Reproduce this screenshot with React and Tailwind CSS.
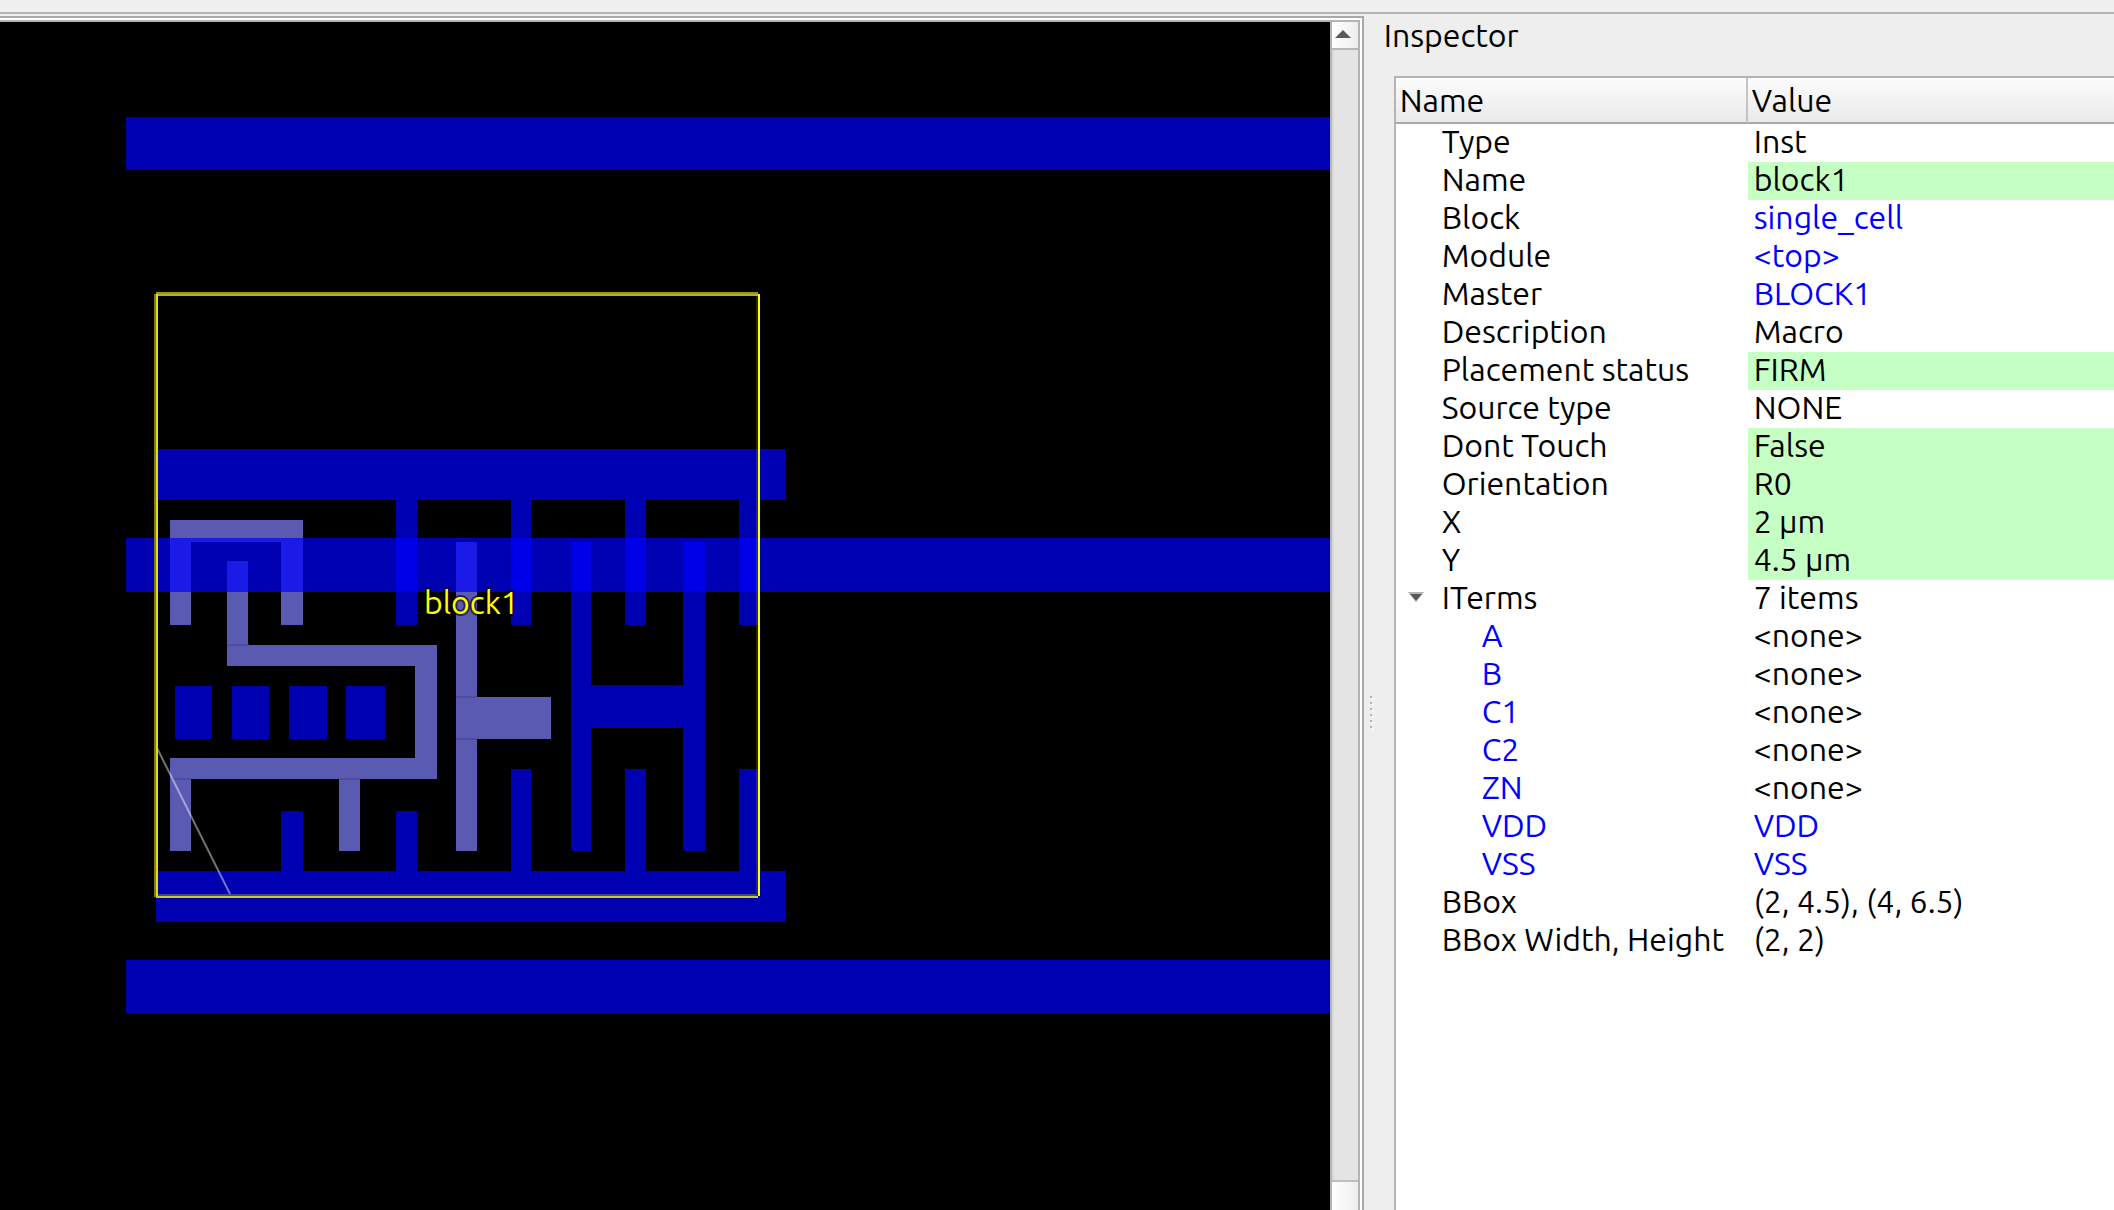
import React, { useState } from "react";

const METAL = "#0000ff";
const PIN = "#8080ff";

// [x1, y1, x2, y2] in canvas pixels
const rails = [
  [126, 95, 4000, 148],
  [126, 516, 4000, 570],
  [126, 938, 4000, 991],
];

const cellMetal = [
  [157, 427, 786, 478],
  [156, 849, 786, 900],
  [396, 478, 417, 603],
  [511, 478, 531, 603],
  [625, 478, 646, 603],
  [739, 478, 758, 603],
  [571, 520, 591, 829],
  [683, 520, 705, 829],
  [591, 663, 683, 706],
  [281, 789, 303, 849],
  [396, 789, 417, 849],
  [511, 747, 531, 849],
  [625, 747, 646, 849],
  [739, 747, 758, 849],
  [175, 664, 212, 717],
  [232, 664, 269, 717],
  [289, 664, 327, 717],
  [346, 664, 385, 717],
];

const pinMetal = [
  [170, 498, 303, 520],
  [170, 520, 191, 603],
  [281, 520, 303, 603],
  [227, 539, 248, 623],
  [227, 623, 437, 644],
  [415, 644, 437, 736],
  [170, 736, 437, 757],
  [170, 757, 191, 829],
  [339, 757, 360, 829],
  [456, 520, 477, 829],
  [477, 675, 551, 717],
];

// thin joints where neighbouring shapes meet
const seams = [
  [227, 622, 249, 624],
  [170, 756, 191, 758],
  [339, 756, 360, 758],
  [456, 674, 477, 676],
  [456, 716, 477, 718],
];

function Shapes({ items, fill, opacity }) {
  return (
    <g fill={fill} opacity={opacity} shapeRendering="crispEdges">
      {items.map(([x1, y1, x2, y2]) => (
        <rect key={`${x1}-${y1}`} x={x1} y={y1} width={x2 - x1} height={y2 - y1} />
      ))}
    </g>
  );
}

function LayoutCanvas() {
  return (
    <svg className="block h-full w-full" role="img" aria-label="Cell layout">
      <Shapes items={cellMetal} fill={METAL} opacity="0.7" />
      <Shapes items={pinMetal} fill={PIN} opacity="0.7" />
      <Shapes items={seams} fill="#4a4a96" opacity="0.7" />
      <Shapes items={rails} fill={METAL} opacity="0.7" />
      <line x1="155" y1="722" x2="231" y2="874" stroke="#ffffff" strokeOpacity="0.45" strokeWidth="2" />
      <g shapeRendering="crispEdges">
        <rect x="154" y="272" width="2" height="603" fill="#807d1a" />
        <rect x="156" y="270" width="602" height="2" fill="#98961f" />
        <rect x="158" y="272" width="600" height="2" fill="#b4b22c" />
        <rect x="156" y="272" width="2" height="602" fill="#e0dc1c" />
        <rect x="158" y="872" width="598" height="2" fill="#47478a" />
        <rect x="156" y="874" width="602" height="2" fill="#cdc92e" />
        <rect x="756" y="274" width="2" height="600" fill="#ffff00" fillOpacity="0.14" />
        <rect x="758" y="272" width="2" height="602" fill="#ffff00" />
      </g>
      <text
        x="424"
        y="592"
        fontSize="32"
        fill="#ffff00"
        stroke="#000000"
        strokeWidth="4"
        strokeOpacity="0.6"
        paintOrder="stroke"
      >
        block1
      </text>
    </svg>
  );
}

function ScrollBar() {
  return (
    <div className="flex w-[30px] shrink-0 flex-col border-x-2 border-[#b4b4b4]">
      <button
        type="button"
        aria-label="Scroll up"
        className="flex h-7 shrink-0 justify-center border-b-2 border-[#b8b8b8] bg-linear-to-r from-white to-[#eeeeee] pt-2 pr-1"
      >
        <svg width="16" height="8" viewBox="0 0 16 8" aria-hidden="true">
          <path d="M8 0 L16 8 H0 Z" fill="#5a5a5a" />
        </svg>
      </button>
      <div className="flex-1 border-l-2 border-[#dadada] bg-[#e4e4e4]" />
      <div className="h-[30px] shrink-0 border-t-2 border-[#bdbdbd] bg-linear-to-r from-white to-[#eeeeee]" />
    </div>
  );
}

const properties = [
  { name: "Type", value: "Inst" },
  { name: "Name", value: "block1", editable: true },
  { name: "Block", value: "single_cell", link: true },
  { name: "Module", value: "<top>", link: true },
  { name: "Master", value: "BLOCK1", link: true },
  { name: "Description", value: "Macro" },
  { name: "Placement status", value: "FIRM", editable: true },
  { name: "Source type", value: "NONE" },
  { name: "Dont Touch", value: "False", editable: true },
  { name: "Orientation", value: "R0", editable: true },
  { name: "X", value: "2 µm", editable: true },
  { name: "Y", value: "4.5 µm", editable: true },
  { name: "ITerms", value: "7 items", group: true },
  { name: "A", value: "<none>", child: true },
  { name: "B", value: "<none>", child: true },
  { name: "C1", value: "<none>", child: true },
  { name: "C2", value: "<none>", child: true },
  { name: "ZN", value: "<none>", child: true },
  { name: "VDD", value: "VDD", child: true, link: true },
  { name: "VSS", value: "VSS", child: true, link: true },
  { name: "BBox", value: "(2, 4.5), (4, 6.5)" },
  { name: "BBox Width, Height", value: "(2, 2)" },
];

function ObjectLink({ children }) {
  return (
    <a href="#" className="text-[#0000ff]">
      {children}
    </a>
  );
}

function Inspector() {
  const [open, setOpen] = useState(true);
  const rows = properties.filter((row) => open || !row.child);

  return (
    <section className="flex min-w-0 flex-1 flex-col pt-1">
      <h2 className="mb-6 pl-5 leading-[34px]">Inspector</h2>
      <div className="ml-[30px] flex-1 border-t-2 border-l-2 border-[#b4b4b4] bg-white">
        <table className="w-full table-fixed border-separate border-spacing-0 text-left whitespace-nowrap">
          <colgroup>
            <col className="w-[352px]" />
            <col />
          </colgroup>
          <thead>
            <tr className="bg-linear-to-b from-[#fcfcfc] to-[#e9e9e9]">
              <th className="h-[46px] border-r-2 border-b-2 border-r-[#c4c4c4] border-b-[#a8a8a8] p-0 pl-1 leading-[38px] font-[450]">
                Name
              </th>
              <th className="h-[46px] border-b-2 border-b-[#a8a8a8] p-0 pl-1 leading-[38px] font-[450]">Value</th>
            </tr>
          </thead>
          <tbody className="align-top leading-[34px]">
            {rows.map((row) => (
              <tr key={row.name}>
                <td className="h-[38px] p-0">
                  <div className={row.child ? "flex pl-[86px]" : row.group ? "flex" : "flex pl-[46px]"}>
                    {row.group && (
                      <button
                        type="button"
                        aria-label="Toggle ITerms"
                        aria-expanded={open}
                        onClick={() => setOpen(!open)}
                        className="flex w-[46px] items-center pl-3"
                      >
                        <svg width="16" height="10" viewBox="0 0 16 10" aria-hidden="true">
                          <path d="M0 0 H16 L8 10 Z" fill="#b4b4b4" />
                          <path d="M2 2 H14 L8 9 Z" fill="#5a5a5a" />
                        </svg>
                      </button>
                    )}
                    {row.child ? <ObjectLink>{row.name}</ObjectLink> : row.name}
                  </div>
                </td>
                <td className={row.editable ? "bg-[#c5ffc3] p-0 pl-1.5" : "p-0 pl-1.5"}>
                  {row.link ? <ObjectLink>{row.value}</ObjectLink> : row.value}
                </td>
              </tr>
            ))}
          </tbody>
        </table>
      </div>
    </section>
  );
}

function SplitterGrip() {
  return (
    <div className="w-0 shrink-0" role="separator" aria-orientation="vertical">
      <div className="flex h-full w-2 flex-col items-end justify-center gap-1 pt-50">
        {[0, 1, 2, 3, 4, 5].map((i) => (
          <span key={i} className="size-0.5 shrink-0 bg-[#b4b4b4] shadow-[2px_2px_0_#f8f8f8]" />
        ))}
      </div>
    </div>
  );
}

export default function App() {
  return (
    <div className="flex h-screen flex-col overflow-hidden bg-[#eeeeee] font-['Ubuntu','Noto_Sans',sans-serif] text-[32px] font-[450] text-black">
      <div className="h-3.5 shrink-0 border-b-2 border-[#b4b4b4] bg-[#f0f0f0]" />
      <div className="flex min-h-0 flex-1">
        <main className="mt-0.5 flex min-w-0 flex-[1363_1_0%] border-t-2 border-r-2 border-[#a8a8a8]">
          <div className="flex min-w-0 flex-1 border-t-2 border-r-2 border-white">
            <div className="flex min-w-0 flex-1 border-t-2 border-[#b4b4b4]">
              <div className="min-w-0 flex-1 bg-black">
                <LayoutCanvas />
              </div>
              <ScrollBar />
            </div>
          </div>
        </main>
        <aside className="flex min-w-0 flex-[751_1_0%]">
          <SplitterGrip />
          <Inspector />
        </aside>
      </div>
    </div>
  );
}
